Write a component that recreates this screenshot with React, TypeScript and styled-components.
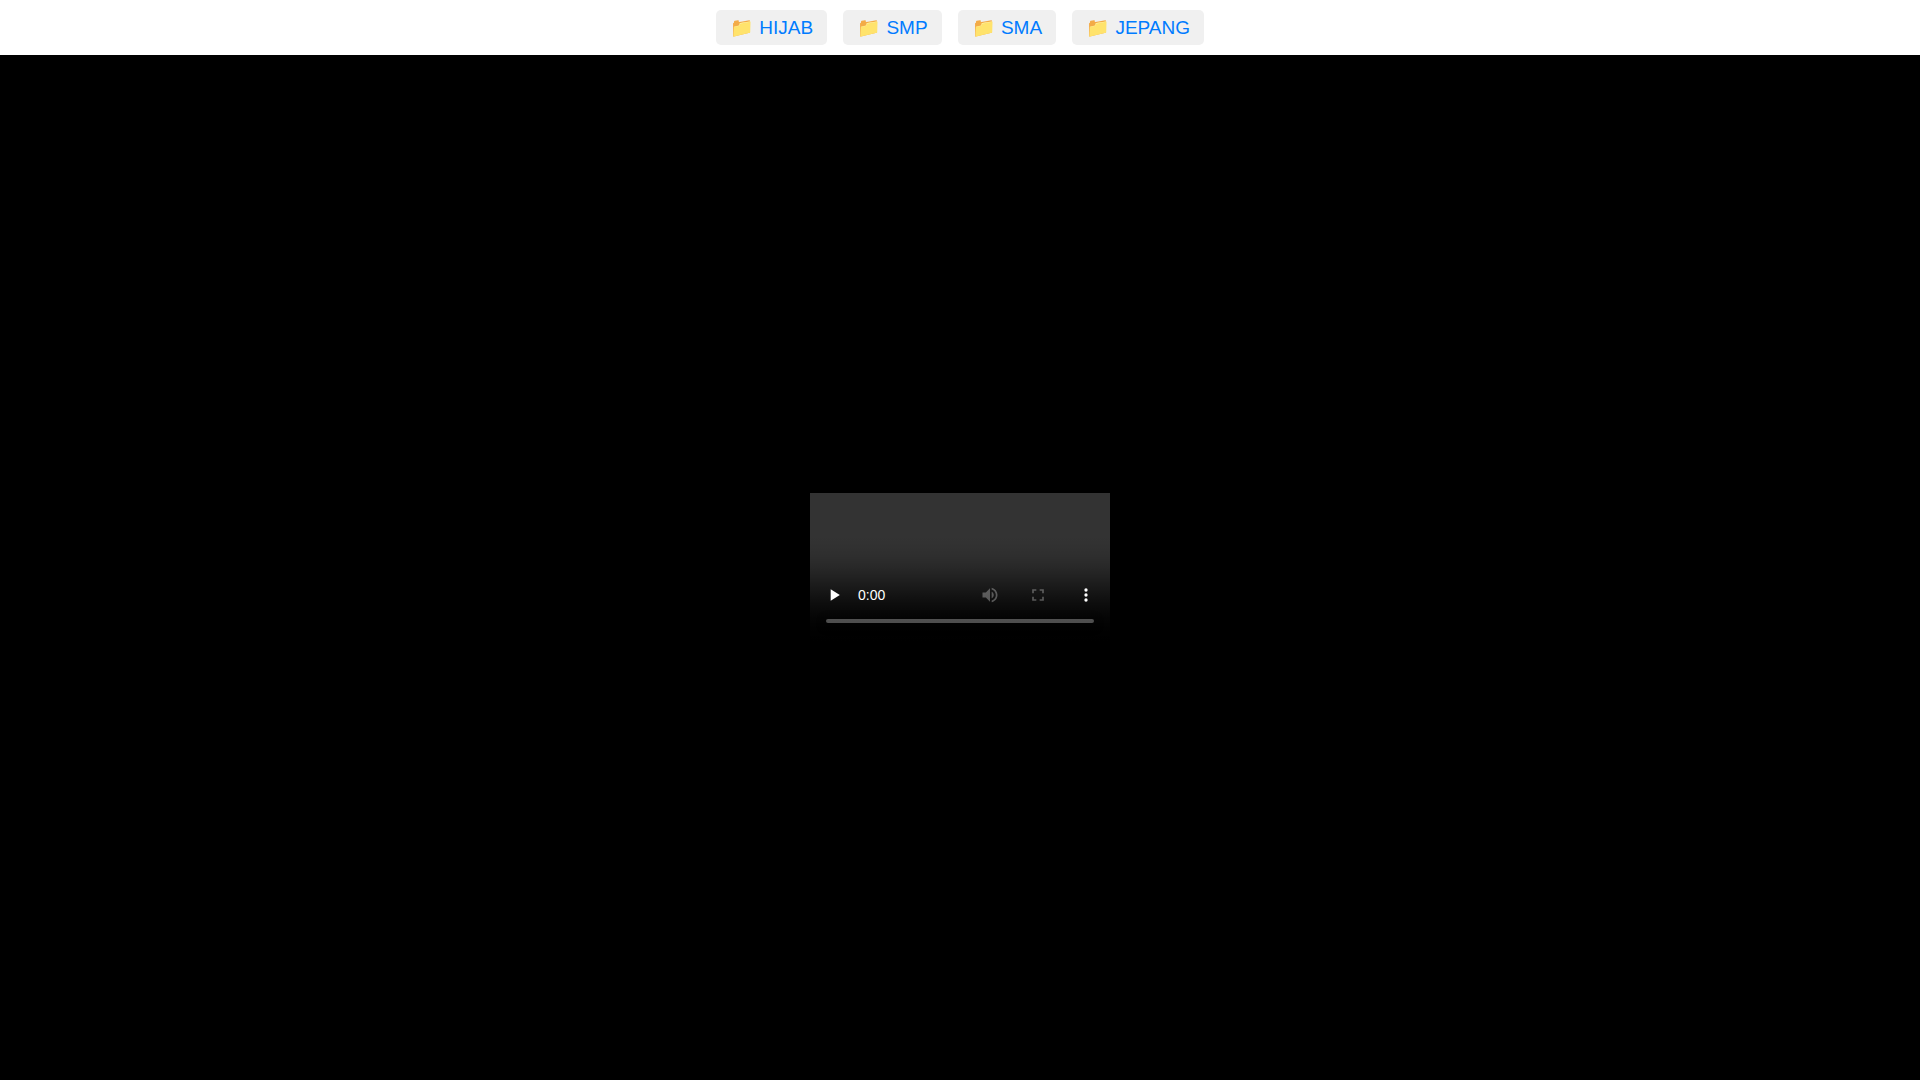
import React from "react";
import styled, { createGlobalStyle } from "styled-components";

const GlobalStyle = createGlobalStyle`
  body {
    margin: 0;
    background: #000;
    font-family: "Liberation Sans", Arial, sans-serif;
  }
`;

const Page = styled.div`
  display: flex;
  flex-direction: column;
  min-height: 100vh;
`;

const FolderBar = styled.nav`
  display: flex;
  justify-content: center;
  gap: 16px;
  padding: 10px;
  background: #fff;
`;

const FolderLink = styled.a`
  padding: 6px 14px;
  border-radius: 5px;
  background: #f0f0f0;
  color: #007bff;
  font-size: 19px;
  line-height: 23px;
  text-decoration: none;
`;

const Stage = styled.main`
  display: flex;
  flex: 1;
  align-items: center;
  justify-content: center;
  background: #000;
`;

const Player = styled.video`
  max-width: 100%;

  &::-webkit-media-controls-current-time-display {
    font-family: "Liberation Sans", Arial, sans-serif;
  }
`;

const folders = ["HIJAB", "SMP", "SMA", "JEPANG"];

export default function App() {
  return (
    <>
      <GlobalStyle />
      <Page>
        <FolderBar>
          {folders.map((name) => (
            <FolderLink key={name} href={`#${name.toLowerCase()}`}>
              📁 {name}
            </FolderLink>
          ))}
        </FolderBar>
        <Stage>
          <Player controls preload="none" src="video.mp4" />
        </Stage>
      </Page>
    </>
  );
}
